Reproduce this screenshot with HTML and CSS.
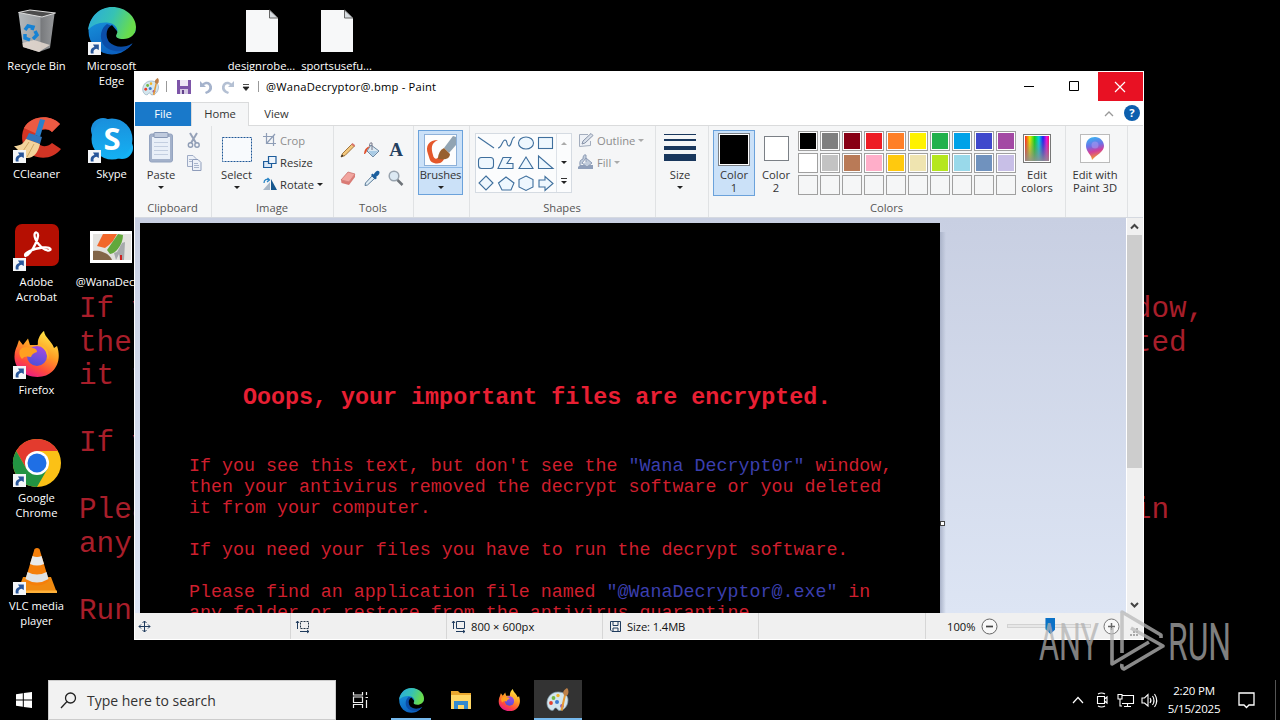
FILE: index.html
```html
<!DOCTYPE html>
<html lang="en">
<head>
<meta charset="utf-8">
<title>@WanaDecryptor@.bmp - Paint</title>
<link rel="stylesheet" href="styles.css">
</head>
<body>
<svg width="0" height="0" class="defs">
  <defs>
    <linearGradient id="edgeTop" x1="0" y1="0" x2="1" y2="0.3"><stop offset="0" stop-color="#2aa9e0"/><stop offset="0.55" stop-color="#36c2b4"/><stop offset="1" stop-color="#69dc4c"/></linearGradient>
    <linearGradient id="edgeMid" x1="0" y1="0" x2="0.4" y2="1"><stop offset="0" stop-color="#1ba0e2"/><stop offset="1" stop-color="#0c62c0"/></linearGradient>
    <linearGradient id="fox" x1="0.8" y1="0" x2="0.3" y2="1"><stop offset="0" stop-color="#fff14a"/><stop offset="0.45" stop-color="#ff9a24"/><stop offset="0.75" stop-color="#ff4a3c"/><stop offset="1" stop-color="#e6178c"/></linearGradient>
    <linearGradient id="foxBall" x1="0.6" y1="0" x2="0.3" y2="1"><stop offset="0" stop-color="#a44be0"/><stop offset="1" stop-color="#4a50d8"/></linearGradient>
    <linearGradient id="sky" x1="0" y1="0" x2="0" y2="1"><stop offset="0" stop-color="#1a8fdc"/><stop offset="1" stop-color="#14b2f4"/></linearGradient>
    <linearGradient id="bin" x1="0" y1="0" x2="1" y2="0"><stop offset="0" stop-color="#b4b8bb"/><stop offset="0.6" stop-color="#9a9da0"/><stop offset="0.62" stop-color="#77797c"/><stop offset="1" stop-color="#97999b"/></linearGradient>
    <linearGradient id="rainbow" x1="0" y1="0" x2="1" y2="0"><stop offset="0" stop-color="#ff2020"/><stop offset="0.2" stop-color="#e8e800"/><stop offset="0.4" stop-color="#10d020"/><stop offset="0.58" stop-color="#00d0e8"/><stop offset="0.75" stop-color="#2020f0"/><stop offset="0.9" stop-color="#e810e0"/><stop offset="1" stop-color="#ff1060"/></linearGradient>
    <linearGradient id="grayFade" x1="0" y1="0" x2="0" y2="1"><stop offset="0.1" stop-color="#808080" stop-opacity="0"/><stop offset="1" stop-color="#909090" stop-opacity="0.9"/></linearGradient>
    <linearGradient id="drop" x1="0.2" y1="0" x2="0.4" y2="1"><stop offset="0" stop-color="#35b6f2"/><stop offset="0.4" stop-color="#6f6fe6"/><stop offset="0.65" stop-color="#d23f9a"/><stop offset="1" stop-color="#f5a623"/></linearGradient>
    <symbol id="shortcut" viewBox="0 0 12 12"><rect width="12" height="12" fill="#f4f6f8"/><path d="M2.600 10.500C2 7 3.400 5 6 4.600L4.600 2.200H10V7.400L7.900 6.200C5.600 6.700 4.600 8 5.200 10.500Z" fill="#28569a"/></symbol>
    <symbol id="edge" viewBox="0 0 48 48">
      <circle cx="24" cy="24" r="23.500" fill="url(#edgeMid)"/>
      <path d="M19 17C13 21 11 30 15 37C19 43 27 45 34 44C40 42 43 39 45 36C38 41 27 41 21 35C17 29 19 22 24 19Z" fill="#0b4ea8"/>
      <path d="M24 18C18 21 17 29 21 35C27 41 37 41 44 36.500Q46 36 49 37V22L47 26L34 30Z" fill="#000"/>
      <path d="M0 23C2 9 12 0 24 0C38 0 48 10 48 20C48 28 42 32 35.500 32C29.500 32 27 30 28.500 27.500C31.500 22 27 16 19 15.500C11 15 4 18 0 23Z" fill="url(#edgeTop)"/>
    </symbol>
    <symbol id="firefox" viewBox="0 0 48 48">
      <path d="M4 15L6 9L10 14L15 7.500L17 14H25C24 8 28 2 31 0C32 7 39 10 41 17L44 15C50 32 40 46 24.500 46C10 46 1 36 1.500 25C1.700 20 3 17 4 15Z" fill="url(#fox)"/>
      <circle cx="24" cy="25" r="10" fill="url(#foxBall)"/>
      <path d="M7 19C11 14 17 17 18 17C23 17 24 19 24 21C21 22 19 23 18 26C14 25 11 25 9 28C6 25 6 21 7 19Z" fill="#ff9f20"/>
      <path d="M24 13C33 13 37 21 35 29C34 19 30 16 24 13Z" fill="#ffb82e"/>
    </symbol>
    <symbol id="palette" viewBox="0 0 24 24">
      <path d="M12 4C4 4 .5 11 1 16C1.500 21 6 24 8 21.500C9 19 11 20 12 22C15 24 22 20 22 12C22 7 18 4 12 4Z" fill="#d3e6ee" stroke="#7c98aa" stroke-width=".7"/>
      <circle cx="5" cy="15" r="1.900" fill="#e4402c"/><circle cx="7.500" cy="10" r="1.900" fill="#75b843"/><circle cx="12" cy="7.500" r="1.700" fill="#f0b52e"/><circle cx="11" cy="14" r="2" fill="#3e7cd0"/><circle cx="16" cy="18" r="1.900" fill="#8c51b4"/>
      <path d="M20 7L16.500 23L14.500 22L18 7Z" fill="#e79a35"/><path d="M18 7C16 4 18 2 21 0C23 2 23 6 20.500 8Z" fill="#bd8048"/>
    </symbol>
  </defs>
</svg>

<div class="desktop">
<pre class="wallpaper">If you see this text, but don't see the <b>"Wana Decrypt0r"</b> window,
then your antivirus removed the decrypt software or you deleted
it from your computer.

If you need your files you have to run the decrypt software.

Please find an application file named <b>"@WanaDecryptor@.exe"</b> in
any folder or restore from the antivirus quarantine.

Run and follow the instructions!</pre>

<div class="icon recycle"><svg viewBox="0 0 48 48"><path d="M5.500 6L41.500 7L37 41L26 45L10 40Z" fill="url(#bin)"/><path d="M5.500 5.500L17 3L42.500 6L29 10Z" fill="#4c4c4c" stroke="#ddd" stroke-width="1"/><path d="M9.500 36L21 33L37 38L26 45L10 40Z" fill="#e4d8cf" opacity=".85"/><path d="M12 23L15 19L20 20L19 23M22 24L24 28L20 32M17 33L12 31L12 27" fill="none" stroke="#1682d4" stroke-width="3.500"/></svg><span>Recycle Bin</span></div>
<div class="icon edge"><svg viewBox="0 0 48 48"><use href="#edge"/><use href="#shortcut" x="0" y="35" width="13" height="13"/></svg><span>Microsoft<br>Edge</span></div>
<div class="icon file1"><svg viewBox="0 0 48 48"><path d="M8 3H31.500L40 11V45H8Z" fill="#f7f8f9"/><path d="M31.500 3V11H40Z" fill="#d7dce0" stroke="#666" stroke-width="1"/></svg><span>designrobe...</span></div>
<div class="icon file2"><svg viewBox="0 0 48 48"><path d="M8 3H31.500L40 11V45H8Z" fill="#f7f8f9"/><path d="M31.500 3V11H40Z" fill="#d7dce0" stroke="#666" stroke-width="1"/></svg><span>sportsusefu...</span></div>
<div class="icon ccleaner"><svg viewBox="0 0 48 48"><path d="M47 9C38-1 18 0 11 13C7 22 9 34 19 40C29 45 41 43 48 34L39 28C32 34 24 31 23 23C23 15 33 12 39 17Z" fill="#d23424"/><path d="M47 9C38-1 18 0 11 13L24 19C27 13 34 12 39 17Z" fill="#ec5a43"/><path d="M27 4L32 5L27 22L22 20Z" fill="#2b80ca"/><path d="M16 18L29 22L27 29L13 24Z" fill="#3375bb"/><path d="M13 24L27 29C25 38 20 44 13 43L1 31C7 31 10 29 13 24Z" fill="#f3d49b"/><path d="M16 27L8 39M21 29L14 42" stroke="#cfa663"/><use href="#shortcut" x="0" y="35" width="13" height="13"/></svg><span>CCleaner</span></div>
<div class="icon skype"><svg viewBox="0 0 48 48"><circle cx="15" cy="15" r="12" fill="#1a8fdc"/><circle cx="34" cy="33" r="11" fill="#14b2f4"/><circle cx="24" cy="24" r="20.500" fill="url(#sky)"/><text x="24" y="35" class="skype-s">S</text><use href="#shortcut" x="0" y="35" width="13" height="13"/></svg><span>Skype</span></div>
<div class="icon acrobat"><svg viewBox="0 0 48 48"><rect x="2" y="1" width="44" height="42" rx="7" fill="#b50f02"/><path d="M12.500 33C10 30 20 25.500 30 24.500C39 23.500 39 28 34.500 27.500C28 26 21.500 17 21.500 12C21.500 8 25.500 9 25 13C24 20 17 32 12.500 33Z" fill="none" stroke="#fff" stroke-width="2.300"/><use href="#shortcut" x="0" y="35" width="13" height="13"/></svg><span>Adobe<br>Acrobat</span></div>
<div class="icon wana"><svg viewBox="0 0 48 48"><rect x="3" y="8" width="42" height="32" fill="#fff"/><rect x="6" y="11" width="38" height="26" fill="#e3e2df"/><path d="M10 23L16 11H30L26 18L22 22L18 25Z" fill="#f2672a"/><path d="M20 27L31 11L36 12C36 22 28 31 23 31Z" fill="#62a83c"/><path d="M6 37V28C14 27 23 31 25 37Z" fill="#826548"/><path d="M27 30L30 29L35 20L38 19L37 37H33L32 31L29 37Z" fill="#a6a9ac"/><path d="M34 32V37" stroke="#c22" stroke-width="2"/></svg><span>@WanaDecr...</span></div>
<div class="icon firefox"><svg viewBox="0 0 48 48"><use href="#firefox"/><use href="#shortcut" x="0" y="35" width="13" height="13"/></svg><span>Firefox</span></div>
<div class="icon chrome"><svg viewBox="0 0 48 48"><circle cx="24" cy="24" r="24" fill="#fbc116"/><path d="M3.200 12A24 24 0 0 1 44.800 12H24L13.600 30Z" fill="#e33b2e"/><path d="M3.200 12A24 24 0 0 0 24 48L34.400 30L13.600 30Z" fill="#229342"/><circle cx="24" cy="24" r="12" fill="#fff"/><circle cx="24" cy="24" r="9.500" fill="#1f6fe5"/><use href="#shortcut" x="0" y="35" width="13" height="13"/></svg><span>Google<br>Chrome</span></div>
<div class="icon vlc"><svg viewBox="0 0 48 48"><path d="M10 30H38L44 46H4Z" fill="#f08a10"/><path d="M4 43.500H44V46H4Z" fill="#ffb13a"/><path d="M21.500 2Q24 0 26.500 2L36 34Q24 43 12 34Z" fill="#f57f0a"/><path d="M19.500 9Q24 11 28.500 9L31 17Q24 20 17 17Z" fill="#e8eaec"/><path d="M14.500 25Q24 30 33.500 25L35.500 32Q24 39 12.500 32Z" fill="#dfe2e4"/><use href="#shortcut" x="0" y="35" width="13" height="13"/></svg><span>VLC media<br>player</span></div>

<section class="window">
  <header class="titlebar">
    <div class="quick">
      <svg class="app" width="18" height="18"><use href="#palette"/></svg>
      <i class="bar"></i>
      <svg class="save" width="16" height="16"><path d="M1 1H15V15H1Z" fill="#7d55a8"/><path d="M4 1H12V7H4Z" fill="#eee8f5"/><path d="M4 10H12V15H4Z" fill="#d4c8e2"/><path d="M6 11H8V15H6Z" fill="#62418b"/></svg>
      <svg class="undo" width="16" height="16"><path d="M2 2V8H8L6 6C10 4 12 7 11 10Q10 12 7 13L8 15Q15 13 14 7.500C13 2.500 8 1.500 4.500 4.500Z" fill="#a5b3cc"/></svg>
      <svg class="redo" width="16" height="16"><path d="M14 2V8H8L10 6C6 4 4 7 5 10Q6 12 9 13L8 15Q1 13 2 7.500C3 2.500 8 1.500 11.500 4.500Z" fill="#b4c0d3"/></svg>
      <svg class="more" width="8" height="8"><path d="M1 1.500H7M1 4H7L4 7.500Z" stroke="#222" fill="#222" stroke-width=".8"/></svg>
      <i class="bar"></i>
    </div>
    <h1>@WanaDecryptor@.bmp - Paint</h1>
    <div class="winbtns">
      <span><svg width="10" height="10"><path d="M0 5.500H10" stroke="#000"/></svg></span>
      <span><svg width="10" height="10"><path d="M.5 .5H9.500V9.500H.5Z" stroke="#000" fill="none"/></svg></span>
      <span class="close"><svg width="10" height="10"><path d="M0 0L10 10M10 0L0 10" stroke="#fff" stroke-width="1.200"/></svg></span>
    </div>
  </header>
  <nav class="tabs">
    <span class="tab file">File</span><span class="tab home">Home</span><span class="tab view">View</span>
    <svg class="collapse" width="10" height="6"><path d="M1 5L5 1L9 5" fill="none" stroke="#999" stroke-width="1.300"/></svg>
    <span class="help">?</span>
  </nav>

  <div class="ribbon">
    <div class="group clipboard">
      <div class="body">
        <div class="big"><svg width="32" height="34"><rect x="4.500" y="4" width="23" height="28" rx="2" fill="#a3b1ca" stroke="#94a4c0"/><rect x="7" y="7" width="18" height="22" fill="#e9eff8"/><path d="M9 12.500H23M9 16.500H23M9 20.500H23M9 24.500H23" stroke="#c3cee0"/><rect x="9" y="2.500" width="14" height="5" rx="1" fill="#bfcadd" stroke="#8797b4"/></svg><span>Paste</span><i class="caret"></i></div>
        <div class="stack">
          <svg width="16" height="18"><path d="M4 1L10 11M11 1L5 11" stroke="#96a2b8" stroke-width="2"/><circle cx="4.500" cy="13" r="2.200" fill="none" stroke="#8f9db5" stroke-width="1.400"/><circle cx="11" cy="13" r="2.200" fill="none" stroke="#8f9db5" stroke-width="1.400"/></svg>
          <svg width="16" height="18"><path d="M1.500 1.500H7L10 4.500V12.500H1.500Z" fill="#edf1f8" stroke="#9eabc5"/><path d="M6.500 5.500H12L15 8.500V16.500H6.500Z" fill="#edf1f8" stroke="#8f9dbb"/><path d="M8 9.500H12M8 11.500H13M8 13.500H13M3 5.500H6M3 7.500H6" stroke="#a9b5cc"/></svg>
        </div>
      </div><label>Clipboard</label>
    </div>
    <div class="group image">
      <div class="body">
        <div class="big"><svg width="32" height="34"><rect x="1.500" y="7.500" width="29" height="24" fill="#f8fafd" stroke="#1f5796" stroke-dasharray="2 1"/></svg><span>Select</span><i class="caret"></i></div>
        <div class="rows">
          <div class="row off"><svg width="14" height="14"><path d="M3.500 0V10.500H13M0 3.500H10.500V13M4 10L12 1" fill="none" stroke="#8e9db6" stroke-width="1.200"/></svg><span>Crop</span></div>
          <div class="row"><svg width="14" height="14"><path d="M5.500 1.500H13V8.500H5.500Z" fill="#eef4fb" stroke="#1d5c9b" stroke-width="1.200"/><path d="M.6 6.500H5.500V8.500H8.500V12.500H.6Z" fill="#dce9f7" stroke="#1d5c9b" stroke-width="1.200"/></svg><span>Resize</span></div>
          <div class="row"><svg width="14" height="14"><path d="M0 13L7 5V13Z" fill="#a9b8c8"/><path d="M8 2L14 13H8Z" fill="#17588f"/><path d="M1 6C1 2 4 2 6 3M4.500 1L6.500 3L4 5" fill="none" stroke="#2b85c5" stroke-width="1.300"/></svg><span>Rotate</span><i class="caret"></i></div>
        </div>
      </div><label>Image</label>
    </div>
    <div class="group tools">
      <div class="body">
        <svg width="16" height="16"><path d="M1 15L2.500 11.500L12 2L14.500 4L5 13.500Z" fill="#f3c77c" stroke="#8a5a20" stroke-width=".8"/><path d="M1 15L2 12.500L3.500 14Z" fill="#222"/><path d="M11 2.500L12.500 1L15.200 3.300L14 4.800Z" fill="#d9766c"/></svg>
        <svg width="16" height="16"><path d="M7 3L15 9L9 15L3 9Z" fill="#dce9f2" stroke="#6b86a0"/><path d="M4 9L14 9L9 14.500Z" fill="#a9cbe5"/><path d="M8 8V1Q5.500 0 5.500 4" fill="none" stroke="#778" /><path d="M0 12Q0 6 6 4L3 8Q3 10 1 12Z" fill="#df4f2b"/></svg>
        <b class="letter">A</b>
        <svg width="16" height="16"><path d="M1 10L8 2L15 4L9 12Z" fill="#f2a59f" stroke="#c46561" stroke-width=".7"/><path d="M1 10L9 12L15 4V7L9 15L1.500 13Z" fill="#d97a74"/></svg>
        <svg width="16" height="16"><path d="M8 6L10.500 8.500L3.500 15L1 15.500L1.500 13Z" fill="#e0edf5" stroke="#5b7c99"/><path d="M7 5L8.500 3.500L9.500 4.500Q13-1 15.300 1.500Q16.500 4 12 7L13 8L11 9.500Z" fill="#1c609e"/></svg>
        <svg width="16" height="16"><circle cx="6" cy="6" r="4.800" fill="#dce9f3" stroke="#98a3ae" stroke-width="1.500"/><path d="M9.500 10L14.500 15" stroke="#6e7379" stroke-width="2.500"/></svg>
      </div><label>Tools</label>
    </div>
    <div class="group brushes">
      <div class="big on"><svg width="33" height="32"><rect x=".5" y=".5" width="32" height="31" fill="#fdfdfd" stroke="#8eb1d9"/><path d="M14 6C5 6 1 12 4 20C6 26 6 28 10 29C16 31 21 27 20 22L15 21C14 26 10 26 9 21C7 14 7 9 14 6Z" fill="#e4572a"/><path d="M32 3L29 2L20 14L25 19L32 11Z" fill="#91a4b3"/><path d="M14 25Q14 17 20 14L26 20Q26 27 14 25Z" fill="#97602f"/></svg><span>Brushes</span><i class="caret"></i></div>
    </div>
    <div class="group shapes">
      <div class="body">
        <div class="gallery">
          <svg width="80" height="58" fill="#eef7fe" stroke="#3f6f9d" stroke-width="1.100"><path d="M2 3L18 14" fill="none"/><path d="M22 14C26 14 26 6 29 6C32 6 30 12 33 12C36 12 35 3 39 3" fill="none"/><ellipse cx="50" cy="9" rx="7.500" ry="6"/><rect x="62.500" y="3.500" width="14" height="11"/><rect x="2.500" y="23.500" width="15" height="11" rx="3"/><path d="M22 34.500L27 23.500H35L31 29.500H37V34.500Z"/><path d="M50 23L57 34.500H43Z"/><path d="M62.500 22V34.500H77Z"/><path d="M10 42L17 49L10 56L3 49Z"/><path d="M30 43L38 49L35 56H26L22.500 49Z"/><path d="M50 42L57 45.500V53L50 56.500L43 53V45.500Z"/><path d="M63 46H69V42.500L77 49.500L69 56.500V53H63Z"/></svg>
          <div class="scroller"><i class="caret up"></i><i class="caret"></i><i class="caret expand"></i></div>
        </div>
        <div class="rows">
          <div class="row off"><svg width="16" height="16"><path d="M10 2.500H1.500V14.500L12.500 13.500V9" fill="#eef1f6" stroke="#a3adbd"/><path d="M4 12L5 9L13 1.500L15 3.500L7 11Z" fill="#d8dfe9" stroke="#8793a8"/></svg><span>Outline</span><i class="caret"></i></div>
          <div class="row off"><svg width="16" height="16"><path d="M2 11H15V15H0V13Z" fill="#8f9fba"/><path d="M8 4L14 9L9 13L4 9ZM8 8V1Q5 0 5 5Q1 6 2 11" fill="#c2cddc" stroke="#8d9cb5"/></svg><span>Fill</span><i class="caret"></i></div>
        </div>
      </div><label>Shapes</label>
    </div>
    <div class="group size">
      <div class="big"><svg width="32" height="34"><path d="M0 4.500H32" stroke="#19375d"/><path d="M0 10H32" stroke="#19375d" stroke-width="2"/><path d="M0 18H32" stroke="#19375d" stroke-width="4"/><path d="M0 27.500H32" stroke="#19375d" stroke-width="7"/></svg><span>Size</span><i class="caret"></i></div>
    </div>
    <div class="group colors">
      <div class="body">
        <div class="big on c1"><i class="swatch"></i><span>Color<br>1</span></div>
        <div class="big c2"><i class="swatch"></i><span>Color<br>2</span></div>
        <div class="cells">
          <i style="background:#000"></i><i style="background:#7f7f7f"></i><i style="background:#880015"></i><i style="background:#ed1c24"></i><i style="background:#ff7f27"></i><i style="background:#fff200"></i><i style="background:#22b14c"></i><i style="background:#00a2e8"></i><i style="background:#3f48cc"></i><i style="background:#a349a4"></i>
          <i style="background:#fff"></i><i style="background:#c3c3c3"></i><i style="background:#b97a57"></i><i style="background:#ffaec9"></i><i style="background:#ffc90e"></i><i style="background:#efe4b0"></i><i style="background:#b5e61d"></i><i style="background:#99d9ea"></i><i style="background:#7092be"></i><i style="background:#c8bfe7"></i>
          <i class="none"></i><i class="none"></i><i class="none"></i><i class="none"></i><i class="none"></i><i class="none"></i><i class="none"></i><i class="none"></i><i class="none"></i><i class="none"></i>
        </div>
        <div class="big edit"><svg width="30" height="34"><rect x="1.500" y="4.500" width="27" height="28" fill="#fff" stroke="#777"/><rect x="3" y="6" width="24" height="25" fill="url(#rainbow)"/><rect x="3" y="6" width="24" height="25" fill="url(#grayFade)"/></svg><span>Edit<br>colors</span></div>
      </div><label>Colors</label>
    </div>
    <div class="group p3d">
      <div class="big"><svg width="30" height="34"><rect x=".5" y="4.500" width="29" height="28" fill="#fdfdfd" stroke="#bbb"/><path d="M12 30C12 25 6 22 6 16C6 10 10 7 15 7C20 7 24 11 24 16C24 22 16 25 12 30Z" fill="url(#drop)"/><circle cx="15" cy="15" r="3.500" fill="#a998ef" opacity=".6"/></svg><span>Edit with<br>Paint 3D</span></div>
    </div>
  </div>

  <div class="workspace">
    <div class="view-area">
      <div class="canvas">
        <h2>Ooops, your important files are encrypted.</h2>
<pre>If you see this text, but don't see the <b>"Wana Decrypt0r"</b> window,
then your antivirus removed the decrypt software or you deleted
it from your computer.

If you need your files you have to run the decrypt software.

Please find an application file named <b>"@WanaDecryptor@.exe"</b> in
any folder or restore from the antivirus quarantine.</pre>
      </div>
      <i class="shade"></i><i class="handle"></i>
    </div>
    <div class="scrollbar">
      <svg width="9" height="16"><path d="M1 10.500L4.500 7L8 10.500" fill="none" stroke="#444" stroke-width="2"/></svg>
      <i class="thumb"></i>
      <svg width="9" height="16"><path d="M1 6L4.500 9.500L8 6" fill="none" stroke="#444" stroke-width="2"/></svg>
    </div>
  </div>

  <footer class="status">
    <div class="seg pos"><svg width="13" height="13"><path d="M6.500 1V12M1 6.500H12M4.500 3L6.500 1L8.500 3M4.500 10L6.500 12L8.500 10M3 4.500L1 6.500L3 8.500M10 4.500L12 6.500L10 8.500" fill="none" stroke="#1f3b5d"/></svg></div>
    <div class="seg"><svg width="14" height="13"><path d="M4.500 1.500H12.500V8.500H4.500Z" fill="none" stroke="#234" stroke-dasharray="2 1"/><path d="M1.500 9V1M0 3L1.500 1L3 3M4 11.500H13M11 10L13 11.500L11 13" fill="none" stroke="#1f3b5d"/></svg></div>
    <div class="seg"><svg width="14" height="13"><path d="M4.500 1.500H12.500V8.500H4.500Z" fill="none" stroke="#1f3b5d"/><path d="M1.500 9V1M0 3L1.500 1L3 3M4 11.500H13M11 10L13 11.500L11 13" fill="none" stroke="#1f3b5d"/></svg><span>800 × 600px</span></div>
    <div class="seg disk"><svg width="11" height="11"><path d="M.5 .5H10.500V10.500H2L.5 9ZM3 .5V4.500H8V.5M3 10V7H8V10" fill="none" stroke="#1f3b5d"/></svg><span>Size: 1.4MB</span></div>
    <div class="seg gap"></div>
    <div class="zoom">
      <span>100%</span>
      <svg width="17" height="17"><circle cx="8.500" cy="8.500" r="7.500" fill="#f8f8f8" stroke="#666"/><path d="M5 8.500H12" stroke="#444" stroke-width="1.700"/></svg>
      <div class="track"><i></i></div>
      <svg width="17" height="17"><circle cx="8.500" cy="8.500" r="7.500" fill="#f8f8f8" stroke="#777"/><path d="M5 8.500H12M8.500 5V12" stroke="#666" stroke-width="1.500"/></svg>
      <svg class="grip" width="9" height="9" fill="#aaa"><path d="M6 0h2v2H6ZM3 3h2v2H3ZM6 3h2v2H6ZM0 6h2v2H0ZM3 6h2v2H3ZM6 6h2v2H6Z"/></svg>
    </div>
  </footer>
</section>

<svg class="watermark" width="200" height="70" viewBox="0 0 200 70">
  <g fill="#b0b0b0" opacity=".72"><text x="5" y="54" textLength="60" lengthAdjust="spacingAndGlyphs">ANY</text><text x="134" y="54" textLength="63" lengthAdjust="spacingAndGlyphs">RUN</text></g>
  <path d="M78 22V58L115 36M88 47V6L127 29V32M97 22L129 40L90 63Q87 62 88 58" fill="none" stroke="#b8b8b8" stroke-width="3.600" stroke-linejoin="round" opacity=".75"/>
</svg>
</div>

<div class="taskbar">
  <span class="start"><svg width="16" height="16"><path d="M0 2.200L6.800 1.300V7.500H0ZM7.800 1.100L16 0V7.500H7.800ZM0 8.500H6.800V14.700L0 13.800ZM7.800 8.500H16V16L7.800 14.900Z" fill="#fff"/></svg></span>
  <div class="search"><svg width="17" height="17"><circle cx="10.500" cy="6" r="5" fill="none" stroke="#222" stroke-width="1.300"/><path d="M7 9.500L1 16" stroke="#222" stroke-width="1.300"/></svg><span>Type here to search</span></div>
  <span class="app taskview"><svg width="16" height="16"><path d="M1.500 0V3H10.500V0M1.500 16V12.500H10.500V16M1.500 5H10.500V10.500H1.500ZM14.500 0V3M14.500 8V16M13.500 5.500H16" fill="none" stroke="#eee" stroke-width="1.200"/></svg></span>
  <span class="app run first"><svg width="25" height="25"><use href="#edge"/></svg></span>
  <span class="app"><svg width="22" height="20"><path d="M1 1H8L10 3H21V19H1Z" fill="#e9a72e"/><path d="M1 5H21V19H1Z" fill="#ffd766"/><path d="M4 19V11H18V19H14V15H8V19Z" fill="#3289ce"/></svg></span>
  <span class="app"><svg width="23" height="23"><use href="#firefox"/></svg></span>
  <span class="app run active"><svg width="24" height="24"><use href="#palette"/></svg></span>
  <div class="tray">
    <svg width="12" height="8"><path d="M1 7L6 1.500L11 7" fill="none" stroke="#fff" stroke-width="1.200"/></svg>
    <svg width="12" height="16"><path d="M1.500 4.500H8.500V11.500H1.500ZM8.500 7L11 5V11L8.500 9M2 2Q5.500 0 9 2M2 14Q5.500 16 9 14" fill="none" stroke="#fff" stroke-width="1.100"/></svg>
    <svg width="17" height="15"><path d="M5 2.500H16.500V10.500H5M10.500 10.500V13.500M7 13.500H14M1 1.500H5V6H1ZM3 6V13H5" fill="none" stroke="#fff" stroke-width="1.100"/></svg>
    <svg width="17" height="15"><path d="M1 5H3.500L7 1.500V13L3.500 10H1ZM9 5Q11 7.500 9 10M11.500 3Q14.500 7.500 11.500 12M13.500 1Q18 7.500 13.500 14" fill="none" stroke="#fff" stroke-width="1.100"/></svg>
  </div>
  <div class="clock"><span>2:20 PM</span><span>5/15/2025</span></div>
  <svg class="note" width="17" height="17"><path d="M1 1H16V13H11L8.500 15.500L6 13H1Z" fill="none" stroke="#fff" stroke-width="1.300"/></svg>
  <i class="peek"></i>
</div>
</body>
</html>
```
FILE: styles.css
```css
* { box-sizing: border-box; }
body { margin: 0; width: 1280px; height: 720px; overflow: hidden; background: #000; font: 11.2px/15px "Open Sans", "Noto Sans", sans-serif; display: flex; flex-direction: column; }
svg { display: block; flex: none; overflow: visible; }
.defs { position: absolute; }
.desktop { position: relative; height: 680px; flex: none; overflow: hidden; }
pre, .canvas h2 { margin: 0; color: #cf1f2e; font-family: "Liberation Mono", monospace; }
pre b { font-weight: 400; color: #3b3fae; }
.wallpaper { position: absolute; left: 79px; top: 293px; font-size: 29.3px; line-height: 33.55px; color: #a81e2a; }

.icon { position: absolute; width: 75px; display: flex; flex-direction: column; align-items: center; color: #fff; text-align: center; white-space: nowrap; gap: 3px; }
.icon svg { width: 48px; height: 48px; }
.recycle { left: -1px; top: 7px; }
.edge { left: 74px; top: 7px; }
.file1 { left: 224px; top: 7px; }
.file2 { left: 299px; top: 7px; }
.ccleaner { left: -1px; top: 115px; }
.skype { left: 74px; top: 115px; }
.acrobat { left: -1px; top: 223px; }
.wana { left: 76px; top: 223px; width: 71px; letter-spacing: -.1px; }
.wana svg { margin-left: -2px; }
.firefox { left: -1px; top: 331px; }
.chrome { left: -1px; top: 439px; }
.vlc { left: -1px; top: 547px; }
.skype-s { font: 700 31px "Open Sans", sans-serif; fill: #fff; text-anchor: middle; }

.window { position: absolute; left: 134px; top: 71px; width: 1010px; height: 569px; border: 1px solid #fff; border-top: 0; background: #fff; display: flex; flex-direction: column; }
.titlebar { height: 31px; flex: none; display: flex; align-items: center; }
.quick { display: flex; align-items: center; padding-left: 7px; width: 131px; }
.quick .bar { width: 1px; height: 11px; background: #999; }
.quick .app { width: 18px; height: 18px; margin-right: 6px; }
.save { margin-left: 9px; }
.undo { margin-left: 6px; }
.redo { margin-left: 6px; }
.more { margin: 0 8px 0 6px; }
.titlebar h1 { margin: 0; font-size: 11.2px; font-weight: 400; letter-spacing: .2px; }
.winbtns { margin-left: auto; display: flex; align-self: stretch; }
.winbtns span { width: 45px; height: 30px; display: flex; align-items: center; justify-content: center; }
.winbtns span:not(.close) svg { margin-right: 4px; }
.winbtns .close { background: #e81123; margin-top: 1px; height: 29px; }
.winbtns .close svg { margin-right: 1px; }
.tabs { height: 24px; flex: none; display: flex; align-items: center; border-bottom: 1px solid #dadbdc; color: #333; }
.tab { height: 24px; margin-bottom: -1px; line-height: 24px; text-align: center; }
.file { width: 56px; background: #1979ca; color: #fff; }
.home { width: 58px; background: #f5f6f7; border: 1px solid #dadbdc; border-bottom: 0; line-height: 22px; }
.view { width: 55px; }
.collapse { margin-left: auto; }
.help { width: 16px; height: 16px; margin: -2px 3px 0 10px; border-radius: 50%; background: #0c5fae; color: #fff; font-weight: 700; text-align: center; }

.ribbon { height: 92px; flex: none; display: flex; background: #f5f6f7; border-bottom: 1px solid #d5d9e0; color: #333; }
.group { display: flex; flex-direction: column; border-right: 1px solid #e0e2e4; padding-top: 4px; }
.group label { margin-top: auto; padding-right: 1px; height: 17px; text-align: center; color: #555; }
.body { display: flex; height: 66px; }
.big { display: flex; flex-direction: column; align-items: center; text-align: center; line-height: 13px; height: 65px; white-space: nowrap; }
.big svg { margin-bottom: 4px; }
.big .caret { margin-top: 5px; }
.caret { width: 0; height: 0; border: 3px solid transparent; border-top: 3px solid #222; border-bottom: 0; }
.on { background: #cbe1f8; border: 1px solid #6ba2db; }
.clipboard { width: 77px; }
.clipboard .big { margin-left: 4px; width: 44px; }
.stack { margin: 2px 0 0 3px; display: flex; flex-direction: column; gap: 4px; }
.image { width: 122px; }
.image .big { width: 45px; margin-left: 2px; }
.rows { display: flex; flex-direction: column; margin: -1px 0 0 4px; }
.row { display: flex; align-items: center; height: 22px; gap: 3px; white-space: nowrap; }
.off { color: #8d8d8d; }
.off .caret { border-top-color: #aaa; }
.tools { width: 80px; }
.tools .body { display: grid; grid-template-columns: repeat(3, 24px); grid-auto-rows: 28px; place-items: center; padding: 6px 0 0 2px; }
.letter { font: 700 19px/20px "Liberation Serif", serif; color: #24405f; }
.brushes { width: 56px; }
.brushes .big { width: 45px; margin-left: 4px; padding-top: 3px; letter-spacing: -.15px; }
.brushes .big svg { margin-bottom: 1px; }
.brushes .big span { border-top: 1px solid #8fb9e6; width: 43px; }
.brushes .big .caret { margin-top: 5px; }
.shapes { width: 186px; }
.gallery { width: 97px; height: 60px; margin: 3px 0 0 5px; border: 1px solid #d5dbe2; background: #fbfcfd; display: flex; }
.scroller { width: 15px; border-left: 1px solid #dde2e8; display: flex; flex-direction: column; justify-content: space-around; align-items: center; }
.up { transform: rotate(180deg); border-top-color: #aaa; }
.expand { position: relative; }
.expand::before { content: ""; position: absolute; left: -3px; top: -6px; width: 6px; height: 1px; background: #333; }
.shapes .rows { margin-left: 6px; }
.size { width: 53px; }
.size .big { margin-right: 4px; }
.colors { width: 357px; }
.c1 { width: 42px; margin-left: 4px; height: 66px; }
.c2 { width: 42px; }
.swatch { border: 1px solid #7b8086; box-shadow: inset 0 0 0 1px #fff; }
.c1 .swatch { width: 32px; height: 33px; margin: 2px 0 2px; background: #000; }
.c2 .swatch { width: 25px; height: 25px; margin: 6px 0 7px; background: #fff; }
.cells { display: grid; grid-template-columns: repeat(10, 20px); grid-auto-rows: 20px; gap: 2px; margin: 1px 0 0 1px; }
.cells i { border: 1px solid #a0a0a0; box-shadow: inset 0 0 0 1px #fff; }
.cells .none { box-shadow: none; }
.edit { margin-left: 6px; width: 30px; }
.p3d { width: 62px; }
.p3d .big { margin-right: 3px; }

.workspace { flex: 1; display: flex; min-height: 0; }
.view-area { position: relative; width: 991px; overflow: hidden; padding: 5px 0 0 5px; background: linear-gradient(#c8cfe2, #dde5f4); }
.canvas { width: 800px; height: 600px; background: #000; overflow: hidden; padding: 162px 0 0 50px; }
.canvas h2 { font-size: 23.35px; line-height: 26px; padding-left: 53px; color: #e81f33; white-space: nowrap; }
.canvas pre { margin: 45px 0 0 -1px; font-size: 18.32px; line-height: 21px; }
.shade { position: absolute; left: 805px; top: 14px; bottom: 0; width: 6px; background: linear-gradient(90deg, #aab3c9, transparent); }
.handle { position: absolute; left: 805px; top: 303px; width: 5px; height: 5px; background: #fff; border: 1px solid #444; }
.scrollbar { width: 17px; background: #f0f0f0; border-left: 1px solid #fff; display: flex; flex-direction: column; align-items: center; padding-right: 1px; }
.thumb { width: 15px; height: 233px; margin: 1px 0 auto; background: #cdcdcd; }

.status { height: 26px; flex: none; display: flex; background: #f0f0f0; color: #111; }
.seg { width: 156px; display: flex; align-items: center; border-right: 1px solid #d6d6d6; padding-left: 5px; gap: 5px; }
.pos { padding-left: 3px; }
.disk { padding-left: 7px; gap: 6px; letter-spacing: -.1px; }
.gap { width: 167px; }
.zoom { flex: 1; display: flex; align-items: center; padding-left: 21px; }
.zoom > svg:first-of-type { margin-left: 6px; }
.track { width: 84px; height: 4px; margin: 0 12px 0 9px; border: 1px solid #d2d2d2; background: #e7e7e7; display: flex; align-items: center; }
.track i { flex: none; width: 10px; height: 16px; margin-left: 37px; background: #0b72c7; clip-path: polygon(0 0, 100% 0, 100% 70%, 50% 100%, 0 70%); }
.grip { margin: 12px 0 0 10px; }
.watermark { position: absolute; left: 1034px; top: 606px; font: 400 52px Roboto, sans-serif; }

.taskbar { height: 40px; display: flex; align-items: center; color: #fff; }
.start { width: 48px; display: flex; justify-content: center; }
.search { width: 288px; height: 40px; background: #f2f2f2; border: 1px solid #ccc; display: flex; align-items: center; gap: 10px; padding-left: 11px; color: #333; font-size: 14px; }
.app { height: 40px; width: 49px; display: flex; align-items: center; justify-content: center; }
.taskview { width: 48px; }
.run { border-bottom: 2px solid #76b9ed; padding-top: 2px; }
.first { width: 40px; margin: 0 5px 0 7px; }
.active { width: 48px; background: #333; }
.tray { margin-left: auto; display: flex; align-items: center; gap: 12px; }
.tray svg:nth-child(n+3) { margin-left: -3px; }
.tray svg:nth-child(4) { margin-left: -5px; }
.clock { margin-left: 9px; width: 54px; display: flex; flex-direction: column; align-items: center; line-height: 18px; font-size: 11.5px; letter-spacing: -.2px; }
.note { margin-left: 17px; }
.peek { width: 1px; height: 40px; background: #555; margin: 0 4px 0 20px; }
```
